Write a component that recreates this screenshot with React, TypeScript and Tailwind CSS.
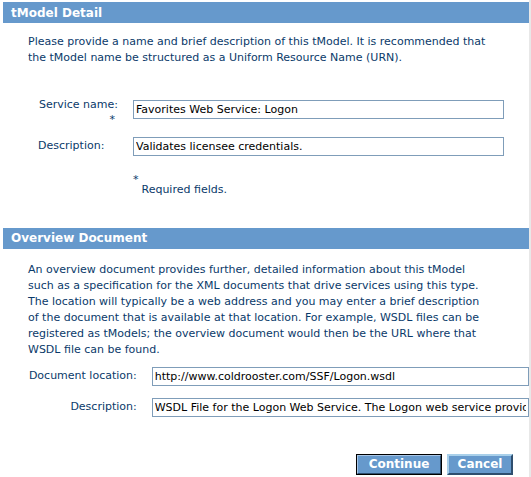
import React from "react";

function SectionHeader({ title }: { title: string }) {
    return (
        <div className="ml-[3px] w-[526px] h-[21px] flex items-center pl-[8px] bg-[#6699cc] text-white font-bold text-[12px]">
            {title}
        </div>
    );
}

function TextBox({ value, width }: { value: string; width: string }) {
    return (
        <input
            readOnly
            value={value}
            className={`${width} h-[19px] border border-[#7f9db9] bg-white px-[2px] text-black text-[11px] outline-none font-['DejaVu_Sans',Verdana,sans-serif]`}
        />
    );
}

export default function App() {
    return (
        <div className="w-[531px] h-[477px] bg-white border-r-2 border-[#e8e8e8] font-['DejaVu_Sans',Verdana,sans-serif] text-[11px] text-[#0a3a6a] overflow-hidden pt-[2px]">
            <SectionHeader title="tModel Detail" />

            <p className="mt-[11px] pl-[28px] leading-[16px]">
                Please provide a name and brief description of this tModel. It is recommended that
                <br />
                the tModel name be structured as a Uniform Resource Name (URN).
            </p>

            <div className="mt-[31px] flex items-start">
                <div className="w-[118px] text-right leading-[15px]">
                    <div>Service name:</div>
                    <div className="pr-[3px]">*</div>
                </div>
                <div className="ml-[15px] mt-[3px]">
                    <TextBox value="Favorites Web Service: Logon" width="w-[371px]" />
                </div>
            </div>

            <div className="mt-[10px] flex items-center">
                <div className="w-[133px] pl-[38px]">Description:</div>
                <TextBox value="Validates licensee credentials." width="w-[371px]" />
            </div>

            <div className="mt-[18px] pl-[133px] flex items-start">
                <span className="leading-[12px]">*</span>
                <span className="ml-[3px] mt-[8px]">Required fields.</span>
            </div>

            <div className="mt-[29px]">
                <SectionHeader title="Overview Document" />
            </div>

            <p className="mt-[13px] pl-[28px] leading-[16px]">
                An overview document provides further, detailed information about this tModel
                <br />
                such as a specification for the XML documents that drive services using this type.
                <br />
                The location will typically be a web address and you may enter a brief description
                <br />
                of the document that is available at that location. For example, WSDL files can be
                <br />
                registered as tModels; the overview document would then be the URL where that
                <br />
                WSDL file can be found.
            </p>

            <div className="mt-[9px] flex items-center">
                <div className="w-[152px] pr-[15px] text-right">Document location:</div>
                <TextBox value="http://www.coldrooster.com/SSF/Logon.wsdl" width="w-[378px]" />
            </div>

            <div className="mt-[12px] flex items-center">
                <div className="w-[152px] pr-[15px] text-right">Description:</div>
                <TextBox
                    value="WSDL File for the Logon Web Service. The Logon web service provides authentication"
                    width="w-[378px]"
                />
            </div>

            <div className="mt-[37px] flex justify-end pr-[16px] gap-[5px]">
                <button className="w-[86px] h-[21px] border border-black bg-[#6699cc] text-white font-bold text-[12px] flex items-center justify-center">
                    <span className="w-full h-full flex items-center justify-center border border-t-[#a9c6e6] border-l-[#a9c6e6] border-r-[#2e4e6e] border-b-[#2e4e6e]">
                        Continue
                    </span>
                </button>
                <button className="w-[66px] h-[21px] bg-[#6699cc] text-white font-bold text-[12px] flex items-center justify-center border-2 border-t-[#a9d0ea] border-l-[#a9d0ea] border-r-[#2e4e6e] border-b-[#2e4e6e]">
                    Cancel
                </button>
            </div>
        </div>
    );
}
